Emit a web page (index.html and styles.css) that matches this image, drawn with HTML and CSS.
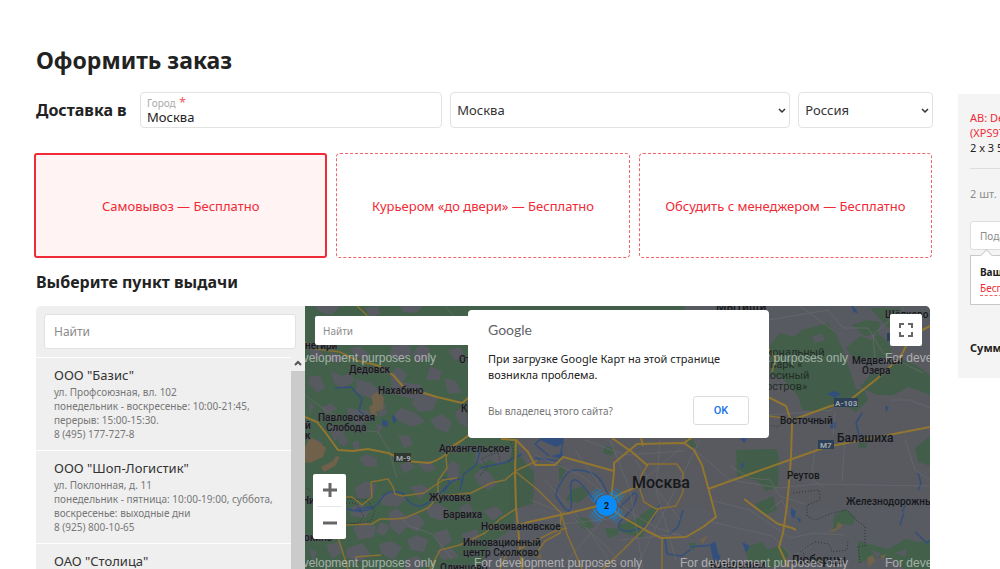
FILE: index.html
```html
<!DOCTYPE html>
<html lang="ru">
<head>
<meta charset="utf-8">
<meta name="viewport" content="width=device-width, initial-scale=1">
<title>Оформить заказ</title>
<link rel="stylesheet" href="styles.css">
</head>
<body>
<div class="page">
  <main class="checkout">
    <h1 class="title">Оформить заказ</h1>

    <form class="delivery">
      <h2 class="heading">Доставка в</h2>
      <div class="city">
        <label class="city-label" for="city">Город <span class="required">*</span></label>
        <input class="city-input" id="city" type="text" value="Москва">
      </div>
      <div class="select region">
        <select aria-label="Регион"><option>Москва</option></select>
        <svg class="chevron" viewBox="0 0 8 6"><path d="M1 1l3 3 3-3"/></svg>
      </div>
      <div class="select country">
        <select aria-label="Страна"><option>Россия</option></select>
        <svg class="chevron" viewBox="0 0 8 6"><path d="M1 1l3 3 3-3"/></svg>
      </div>
    </form>

    <div class="options">
      <button class="option selected" type="button">Самовывоз — Бесплатно</button>
      <button class="option" type="button">Курьером «до двери» — Бесплатно</button>
      <button class="option" type="button">Обсудить с менеджером — Бесплатно</button>
    </div>

    <h2 class="heading points-heading">Выберите пункт выдачи</h2>

    <section class="picker">
      <div class="points">
        <div class="points-search"><input type="text" placeholder="Найти" aria-label="Найти пункт"></div>
        <div class="points-body">
          <ul class="points-list">
            <li class="point">
              <h3>ООО "Базис"</h3>
              <p>ул. Профсоюзная, вл. 102<br>понедельник - воскресенье: 10:00-21:45,<br>перерыв: 15:00-15:30.<br>8 (495) 177-727-8</p>
            </li>
            <li class="point">
              <h3>ООО "Шоп-Логистик"</h3>
              <p>ул. Поклонная, д. 11<br>понедельник - пятница: 10:00-19:00, суббота,<br>воскресенье: выходные дни<br>8 (925) 800-10-65</p>
            </li>
            <li class="point">
              <h3>ОАО "Столица"</h3>
            </li>
          </ul>
          <div class="scrollbar">
            <svg viewBox="0 0 8 6"><path d="M1 5l3-3 3 3"/></svg>
            <div class="thumb"></div>
          </div>
        </div>
      </div>

      <div class="map">
        <svg class="map-canvas" viewBox="305 306 625 263" preserveAspectRatio="xMinYMin slice">
          <rect x="305" y="306" width="625" height="263" fill="#595b62"/>
          <g fill="#43604b">
            <path d="M305 306H524L540 335 528 380 515 428 519 455 534 472 533 504 517 508 512 529 491 543 479 569H305z"/>
            <path d="M524 306h160l8 20-50 14-80-8-30 8z"/>
            <path d="M770 345l10-12 14 4 8-7 26-7 8 12 8 18 8 24 6 17-20 10-14 8-22-2-4-14-16-18-12-4z"/>
            <path d="M846 348l14-12 12 4 6-6 10 8 4 12-12 8-14-4-12 2zM852 325l14-5 14 2-2 12-14 2zM870 308h30l8 12-20 8z"/>
            <path d="M870 375l18-8 14-8 14 6 14 10v20l-10-4-12-4-14 8-16 0-10-4-8-4zM850 388l14 2 4 10-12 12-10-6z"/>
            <path d="M736 450l40-1 3 8-1 30-12 4-8-10-21-5zM925 440l5-4v30l-12-4-3-14zM860 440l8-4-2 13-8-2z"/>
            <path d="M755 504l18-8 4 14-12 5zM834 516l10-7 12 8-3 8-12-1-8 6z"/>
            <path d="M745 547l18-5 4 8 14-5 8 8-6 12-14 3-8-6-12 3zM858 541l30 8 18-10 12 3 12-2v29h-26l-12-11-18 0-16 5z"/>
            <path d="M571 490l11-4 6 9-10 8-12-3zM605 446l10 2-3 8-9-3zM649 509l8-2-4 13-8 4-2 14-20-5-5-8 18-6 8-7zM579 517l10 2 5 8-9 3-7-6zM605 528l16 1-4 6-9 3zM559 463l7 7-7 13zM688 543l8 0-2 8zM685 437l8 3 4 8-6-1z"/>
          </g>
          <g fill="#595b62">
            <path d="M315 306h25l-8 9-12-3zM365 308l13-2 2 8-10 3zM400 306h22l-5 7-14-1zM309 350l9-2 6 7-10 5zM330 352l14 5-5 6-10-3zM350 349l8-3 12 8-6 7-9-5zM392 346l16-2 4 9-12 7-10-5zM420 343l10 6-2 10-12 3-4-7zM448 350l12-3 5 10-10 4z"/>
            <path d="M310 376l10 0 5 11-7 6-10-10zM331 371l11 5 8-3 5 7-12 9-9-6zM356 379l15 4 12 11-9 6-18-8zM390 375l8-8 9 7-4 8 18 3 5 9-14 5-19-5zM430 366l12 5-3 9-13 0zM444 378l12 3 6 12-14 0zM421 392l17 6-5 12-14 2-8-9z"/>
            <path d="M308 400l6 6-4 9zM322 407l9-4 6 6-11 6zM347 407l9 3 12 0 4 9-13 7-10-7zM377 402l8 2 2 10-8 3zM393 415l8-7 15 5 9 9-12 5-13-5zM430 420l12-6 10 8-4 11-12-5zM455 412l10-7 3 22-9-4zM329 426l13 0 3 9-11 6zM376 423l7 4-5 8zM398 435l12 1 3 9-9 3z"/>
            <path d="M316 438l7 5-6 8zM338 441l4-8 7 9-6 5zM352 443l6-3 2 10-5 3zM359 458l8-4 10 4 0 9-13-1zM400 465l9-4 6 6-11 7zM418 464l12-4 6 9-10 4zM446 470l6-10 8 6-2 14-8 1zM475 454l14-6 3 9-8 7-9-1zM493 451l19-3-2 11-12 6-7-5zM474 476l7-8 9 5 7 11-8 6-10-5z"/>
            <path d="M355 488l10-7 12 4-5 12-14 2zM380 497l12-6 14 8-9 8-15-2zM410 487l11-3 9 6-11 9zM389 513l7-5 10 8 11-3 8 10-8 9-10-5-8 8-9-8zM425 508l12-5 12 6-5 12-14-4zM351 507l8-3 12 5-6 9-14-2zM353 528l11-6 12 4-2 11-15 3zM380 522l10 4-6 10-8-4zM459 507l10-4 4 9-10 4zM483 511l13-5 7 7-10 8z"/>
            <path d="M326 545l12-3 6 9-12 8zM347 548l16-5 7 11-10 8-14-5zM379 544l11-3 12 6-8 13-13-7zM407 540l10-5 11 5-4 12-13-2zM434 533l13-4 5 12-11 8zM436 551l15-4 8 10-16 3zM461 534l16-5 3 9-12 7zM309 548l8 4-4 10zM405 560l12-4 10 8-9 5h-13zM497 540l10-3 1 9-10 5z"/>
            <path d="M812 336l10-2 3 6-10 3zM871 550l10 3-4 6zM895 553l12-4-2 8z"/>
          </g>
          <g fill="#71624a">
            <path d="M305 447l5-10 9 5 7 6-3 9-13 6-5-1zM321 467l12-6 3-5 4 1-5 9-11 6zM371 396l7-5 6 7-1 11-7 3 2 4-7-1-2-8 4-3z"/>
            <path d="M828 531l8-3 2-6 5 3-4 4-6 3zM867 558l6-3 2 6-6 6zM880 556l6-2-3 6zM533 557l8-4 1 6zM700 540l8-5-5 9z"/>
          </g>
          <g class="water">
            <path d="M345 508q12 5 22 2t15-12 21-5q6 12 15 13t25-16 19-8M355 510q10-3 20-3M444 492l6-10-7-5M460 490l4-16 12-9 4-13-13-5M480 468l27-6 15-8M335 388l16-1 11 12-3 12 12 8"/>
            <path d="M535 458l25 3 3-22-18-4-10 9 14 12M557 490q7-14 12-18t20 0 20 30-18-6-20-1-15 1z"/>
            <path d="M620 507l13-13q8-4-1 15l-12 13q-5 9 8 9t25-12l7-15M665 539l2 15 15 2 9-7M690 547l22-2 8 13M683 510l-5 17-10 8"/>
            <path d="M862 413l-6 10 3 13M852 306l5 7M918 490l3-7-3-10M900 525l4-12M908 500l-6 12M915 532l12 11 3-3"/>
          </g>
          <g fill="#334f7d">
            <path d="M383 419l5 3-1 5-5-2zM393 414l4 6-3 4-2-5zM538 434l22 2 4 7-8 4-14-6zM551 456l12-3-1 6zM827 394l7-3 7 3-6 4zM885 405l4 3-3 4zM831 421l5 2-1 6-5-1zM791 508l5 3-2 8-3-4zM796 517l5 2-1 4zM710 545l5-4 5 18-6 4zM742 542l8 4-4 7zM852 306l5 4-4 3zM741 464l4-2-3 8zM739 437l8 2-3 4z"/>
          </g>
          <g class="streets">
            <path d="M305 395l20 15 24 12M360 430l18 2 11 18 8 28M400 518l10 8 22 8 20 25M310 429l-3 0M445 306l12 14"/>
            <path d="M535 455l45 20 55 40 20 12 30 10M545 480l40 45 30 44M560 569l60-70 60-50M530 500l40 15 35 30 20 24M610 440l20 50 13 79M575 450l25 35 15 20M635 460l45 60M660 440l-4 50 20 70M700 440l-30 60-35 69M620 540l60-6M585 440l40 15 60-4M550 525l60-6"/>
            <path d="M695 450l35 30 50 8 36-4 114 2M710 500l40 10 40 28 25-5 30 2M712 522l60 14 20 20 20-10M730 466l20 12 20 2 10 16 25 8M770 510l12-10 8 17M815 449l-4 30 12 8M845 440l-3 42M905 440l10 30 15 10"/>
            <path d="M768 320l60-10 15 18 25 0 15 25 40 20M800 306l34 25M875 360l-2-25 32-28M890 400l20 0 20 8M835 412l-2 24M768 415l65-5"/>
          </g>
          <g class="dotted">
            <path d="M346 503l10 0 8 14-7 7-11-1M339 495l9 4 19 1 8 11-4 10-20 3M480 475l8-8-7-8 17-7 2 8M511 439l3 18-7 5"/>
            <path d="M793 493l26-3 1 10-13 5 0 11 8 4 18-7 14-3 10 11 8 5 0 20-7 0 2 17M800 552l15-10 14 2 3 8 15-2 1-9M805 560l-2-8M768 425l10 2 6-6M310 490l-5-3M310 560l-5 4"/>
          </g>
          <g class="roads thin">
            <path d="M344 497l8 0 10 8 10-8-1-15 17-3 5 8 2 7 8 2 21-3 13-9 6-4 14-2M438 481l0 18M346 525l26-1 8-5 14 0 11-1 23-10 8-9 5-3 30-3 20-10 14-3 12-10 20-9M337 534l11 35M355 557l26-2M430 569l10-19 20-5 25-12 15-14 17-11M500 569l5-12 28-15 20-10 14-4"/>
            <path d="M438 481l9-13-1-11 6-11 12-7M357 306l15 14M305 342l10 7 25 3 16 8 13 4M516 472l22 18 23 23 6 21 15 35M561 513l-1 20-15 8-9 13"/>
            <path d="M648 464h15l14 0 6 9 0 19-7 14-20 3-12-7-4-12 1-14zM659 508l-14 20-22 22-20 19M662 538v31M768 416l31 4M768 348l8 10-4 14"/>
          </g>
          <g class="roads">
            <path d="M305 417l12 5 8 10 13 18 15 1 15-2 20 4 18 8 23 2q15-4 25-17l18-13 20-8"/>
            <path d="M369 363l10 3 14 9 14 16 17 2 13 4 25 6 10-8"/>
            <path d="M516 440l-1 32 1 35 6 62M501 439l15 1 12 12 7 13 20 0 8-8 51 14"/>
            <path d="M611 500l3-28v-9l23-19 47-1 10 7 8 15 6 22 8 30-13 10-17 10-25 1-14-7-25-14-10-8"/>
            <path d="M500 530l29-8 40-9 33-8 20-12 17-7M708 489l42-15 45-16 31-11 104-20M612 438l20 14 16 14M641 438l2 8M684 443l14-10 20-5"/>
            <path d="M768 397l18 9 6 18-1 34-2 25-2 22-4 28-4 14 9 20M792 420l36-13 22-7 28-22 23-22 10-20 19-10M744 499l16 12 18 13 14 4 4 2"/>
          </g>
          <g class="shield">
            <path fill="#303630" d="M394 453h17v9h-17z"/><text x="396" y="461">M-9</text>
            <path fill="#2c4058" d="M834 398h24v9h-24z"/><text x="835" y="406">A-103</text>
            <path fill="#2c4058" d="M818 440h16v9h-16zM887 333h12v8h-12z"/><text x="820" y="448">M7</text>
          </g>
          <g class="labels">
            <text x="305" y="349">негири</text><text x="349" y="373">Дедовск</text><text x="378" y="394">Нахабино</text>
            <text x="318" y="421">Павловская</text><text x="326" y="431">Слобода</text>
            <text x="305" y="429">й</text><text x="305" y="439">к</text><text x="459" y="363">Отрадное</text><text x="461" y="412">Красногорск</text>
            <text x="439" y="452">Архангельское</text><text x="429" y="501">Жуковка</text><text x="443" y="518">Барвиха</text>
            <text x="481" y="530">Новоивановское</text><text x="463" y="546">Инновационный</text><text x="463" y="556">центр Сколково</text>
            <text x="440" y="571">Одинцово</text><text x="302" y="504">Ни</text><text x="304" y="541">окино</text>
            <text x="780" y="424">Восточный</text><text x="787" y="479">Реутов</text><text x="846" y="505">Железнодорожный</text>
            <text x="852" y="364">Медвежьи</text><text x="862" y="374">Озера</text><text x="885" y="318">Щёлково</text>
            <g class="park"><text x="766" y="356">иональный</text><text x="770" y="368">парк «</text><text x="762" y="379">Лосиный</text><text x="766" y="390">остров»</text></g>
            <g class="town"><text x="716" y="311">Мытищи</text><text x="837" y="442">Балашиха</text><text x="791" y="564">Люберцы</text></g>
            <text class="capital" x="632" y="488">Москва</text>
            <text x="710" y="568">Котельники</text>
          </g>
          <g class="watermark">
            <text x="268" y="362">For development purposes only</text><text x="680" y="362">For development purposes only</text><text x="885" y="362">For development purposes only</text>
            <text x="268" y="567">For development purposes only</text><text x="474" y="567">For development purposes only</text><text x="680" y="567">For development purposes only</text><text x="885" y="567">For development purposes only</text>
          </g>
          <g class="cluster">
            <g fill="none" stroke="#1189dd" stroke-width="2">
              <circle cx="606.5" cy="505.5" r="13" stroke-dasharray="14 6.4" stroke-dashoffset="-3" opacity=".8"/>
              <circle cx="606.5" cy="505.5" r="16" stroke-dasharray="14 11.1" stroke-dashoffset="-5" opacity=".5"/>
              <circle cx="606.5" cy="505.5" r="19" stroke-dasharray="13 16.8" stroke-dashoffset="-8" opacity=".3"/>
            </g>
            <circle cx="606.5" cy="505.5" r="10.5" fill="#098cf8"/>
            <text x="606.5" y="509" text-anchor="middle">2</text>
          </g>
        </svg>

        <input class="map-search" type="text" placeholder="Найти" aria-label="Найти на карте">
        <button class="fullscreen" type="button" aria-label="Полноэкранный режим">
          <svg viewBox="0 0 16 16"><path d="M2 6V2h4M10 2h4v4M14 10v4h-4M6 14H2v-4"/></svg>
        </button>
        <div class="zoom">
          <button type="button" aria-label="Увеличить"><svg viewBox="0 0 16 16"><path d="M8 1v14M1 8h14"/></svg></button>
          <button type="button" aria-label="Уменьшить"><svg viewBox="0 0 16 16"><path d="M1 8h14"/></svg></button>
        </div>
        <div class="dialog" role="dialog" aria-label="Google">
          <div class="brand">Google</div>
          <p>При загрузке Google Карт на этой странице возникла проблема.</p>
          <div class="dialog-foot"><a href="#">Вы владелец этого сайта?</a><button type="button">OK</button></div>
        </div>
      </div>
    </section>
  </main>

  <aside class="cart">
    <div class="cart-item"><a href="#">AB: Dell<br>(XPS97</a><br>2 x 3 5</div>
    <div class="cart-count">2 шт.</div>
    <input class="promo" type="text" placeholder="Подарочный" aria-label="Подарочный код">
    <div class="hint"><strong>Ваша</strong><br><a href="#">Бесплатно</a></div>
    <strong class="total">Сумма</strong>
  </aside>
</div>
</body>
</html>
```

FILE: styles.css
```css
* { box-sizing: border-box; }
body { margin: 0; background: #fff; color: #222; font: 13px/18px "Noto Sans", sans-serif; }
h1, h2, h3, p, ul { margin: 0; padding: 0; }
button, input, select { font-family: inherit; color: inherit; }
a { text-decoration: none; color: #f02a36; }

.page { display: flex; gap: 25px; height: 100vh; overflow: hidden; padding-left: 34px; }
.checkout { flex: 1; min-width: 0; display: flex; flex-direction: column; padding-top: 44px; }
.title { padding-left: 2px; font-size: 23px; line-height: 32px; }
.heading { font-size: 16px; line-height: 24px; }

.delivery { display: flex; align-items: center; gap: 8px; margin-top: 16px; padding-left: 2px; }
.delivery .heading { flex: 0 0 96px; }
.city, .select { height: 36px; border: 1px solid #e2e2e2; border-radius: 4px; }
.city { flex: 289 0 0; min-width: 0; padding: 5px 6px 0; }
.city-label { display: block; font-size: 10px; line-height: 11px; color: #aaa; }
.required { margin-left: 1px; font-size: 12px; line-height: 9px; color: #f2545c; }
.city-input { display: block; width: 100%; height: 15px; border: 0; padding: 0; font-size: 13px; background: none; outline: 0; }
.select { display: flex; position: relative; color: #333; }
.region { flex: 339 0 0; }
.country { flex: 133 0 0; }
.select select { appearance: none; flex: 1; min-width: 0; border: 0; background: none; padding: 0 6px; font-size: 13px; }
.chevron { position: absolute; right: 3px; top: 15px; width: 8px; height: 6px; fill: none; stroke: #333; stroke-width: 1.5; pointer-events: none; }

.options { display: grid; grid-template-columns: repeat(3, 1fr); gap: 9px; margin: 25px 1px 0 0; }
.option { height: 105px; border: 1px dashed #f4626a; border-radius: 4px; background: #fff; color: #f02a36; font-size: 13px; }
.option.selected { border: 2px solid #f02a36; background: #fff3f3; border-radius: 3px; }
.points-heading { margin-top: 12px; padding-left: 2px; }

.picker { flex: 1; min-height: 0; display: flex; margin: 12px 3px 0 2px; border-radius: 5px 5px 0 0; overflow: hidden; }
.points { flex: 0 0 269px; display: flex; flex-direction: column; background: #efefef; }
.points-search { padding: 8px 9px 8px 8px; }
.points-search input { display: block; width: 100%; height: 35px; border: 1px solid #e2e2e2; border-radius: 3px; padding: 0 9px; font-size: 12px; }
input::placeholder { color: #8c8c8c; opacity: 1; }
.points-body { flex: 1; min-height: 0; display: flex; }
.points-list { flex: 1; min-width: 0; list-style: none; overflow: hidden; }
.point { height: 93px; border-top: 1px solid #fff; padding: 7px 0 0 18px; white-space: nowrap; }
.point h3 { font-size: 13px; line-height: 20px; font-weight: 400; color: #333; }
.point p { font-size: 10px; line-height: 14px; color: #777; }
.scrollbar { flex: 0 0 14px; display: flex; flex-direction: column; align-items: center; padding-top: 3px; gap: 5px; }
.scrollbar svg { width: 8px; height: 6px; fill: none; stroke: #555; stroke-width: 2; }
.thumb { flex: 1; width: 14px; background: #cbcbcb; }

.map { position: relative; flex: 1; min-width: 0; overflow: hidden; background: #595b62; }
.map-canvas { display: block; width: 100%; height: 100%; }
.water { fill: none; stroke: #334f7d; stroke-width: 1.5; }
.streets { fill: none; stroke: #6a6a6e; stroke-width: 1; opacity: .7; }
.dotted { fill: none; stroke: #303337; stroke-width: 1; stroke-dasharray: 1 2; }
.roads { fill: none; stroke: #92762f; stroke-width: 2; stroke-linejoin: round; }
.roads.thin { stroke: #8a7032; stroke-width: 1.5; }
.labels { font: 500 10px Roboto, sans-serif; fill: #17191b; stroke: #595b62; stroke-width: 1px; paint-order: stroke; }
.labels .park { font-size: 11px; font-weight: 400; fill: #222d27; stroke: none; }
.labels .town { font-size: 12px; }
.labels .capital { font-size: 16px; }
.shield { font: 700 8px Roboto, sans-serif; }
.shield text { fill: #a3a9ad; }
.watermark { font: 12px "Liberation Sans", sans-serif; fill: #fff; opacity: .5; }
.cluster text { font: 700 9px Roboto, sans-serif; fill: #111; }

.map-search { position: absolute; left: 10px; top: 10px; width: 160px; height: 29px; border: 0; border-radius: 2px; padding: 0 8px; font-size: 10px; }
.fullscreen { position: absolute; right: 8px; top: 8px; width: 32px; height: 32px; border: 0; border-radius: 2px; background: #fff; padding: 8px; }
.fullscreen svg { display: block; width: 16px; height: 16px; fill: none; stroke: #666; stroke-width: 2; }
.zoom { position: absolute; left: 8px; top: 168px; width: 33px; border-radius: 2px; background: #fff; padding: 0 4px; }
.zoom button { display: flex; align-items: center; justify-content: center; width: 100%; height: 32px; border: 0; background: none; padding: 0; }
.zoom button + button { height: 33px; border-top: 1px solid #e6e6e6; }
.zoom svg { width: 16px; height: 16px; fill: none; stroke: #666; stroke-width: 3; }
.dialog { position: absolute; left: 163px; top: 4px; width: 301px; height: 128px; border-radius: 4px; background: #fff; padding: 10px 20px; }
.brand { font: 14px/20px Lato, sans-serif; color: #5f6368; }
.dialog p { margin-top: 11px; font-size: 11px; line-height: 16px; }
.dialog-foot { display: flex; justify-content: space-between; align-items: center; margin-top: 13px; }
.dialog-foot a { color: #757575; font-size: 10px; }
.dialog-foot button { width: 56px; height: 29px; border: 1px solid #dadce0; border-radius: 3px; background: #fff; color: #1a73e8; font: 500 11px Roboto, sans-serif; }

.cart { flex: 0 0 42px; align-self: flex-start; margin-top: 94px; height: 284px; overflow: hidden; background: #f4f4f4; padding: 16px 0 0 12px; font-size: 11px; line-height: 15px; white-space: nowrap; }
.cart-item { height: 59px; border-bottom: 1px solid #ddd; }
.cart-count { margin-top: 17px; color: #8c8c8c; }
.promo { display: block; width: 160px; height: 29px; margin-top: 20px; border: 1px solid #ddd; border-radius: 3px; padding: 0 9px; font-size: 10px; }
.hint { position: relative; width: 160px; height: 50px; margin-top: 5px; border: 1px solid #c8c8c8; background: #fff; padding: 8px 9px; font-size: 10px; line-height: 16px; }
.hint::before { content: ""; position: absolute; left: 11px; top: -5px; width: 8px; height: 8px; border: 1px solid #c8c8c8; border-width: 1px 0 0 1px; background: #fff; transform: rotate(45deg); }
.hint a { border-bottom: 1px dashed #f4626a; }
.total { display: block; margin-top: 35px; }
```
